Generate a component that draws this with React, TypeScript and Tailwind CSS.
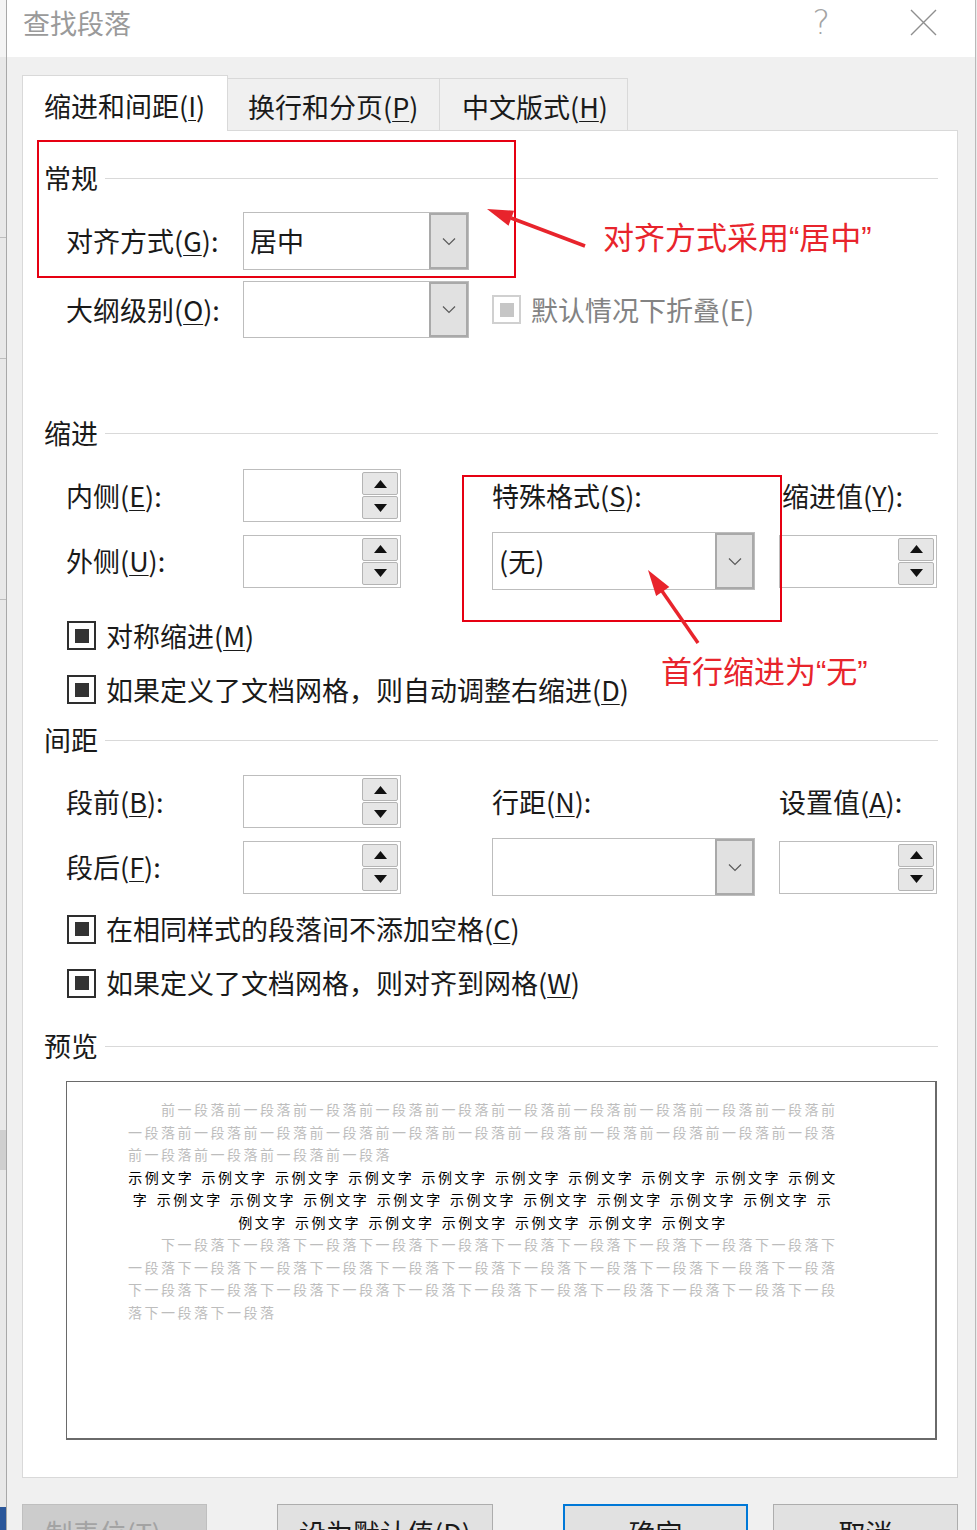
import React from "react";

const FONT = "font-['Noto_Sans_CJK_SC','Noto_Sans',sans-serif]";

const BEFORE = "前一段落".repeat(25);
const AFTER = "下一段落".repeat(34);
const S = "示例文字";
const SAMPLE = [
  Array(9).fill(S).join(" ") + " 示例文",
  "字 " + Array(9).fill(S).join(" ") + " 示",
  "例文字 " + Array(6).fill(S).join(" "),
];

function Key({ children }: { children: React.ReactNode }) {
  return <u className="underline decoration-1 underline-offset-[3px]">{children}</u>;
}

function Q({ children }: { children: React.ReactNode }) {
  return <span className="font-['Liberation_Sans',sans-serif]">{children}</span>;
}

function Label({ children, className = "" }: { children: React.ReactNode; className?: string }) {
  return <span className={`whitespace-nowrap text-[27px] leading-[36px] text-[#1a1a1a] ${className}`}>{children}</span>;
}

function Chevron() {
  return (
    <svg width="14" height="9" viewBox="0 0 14 9">
      <path d="M1 1.5 L7 7.5 L13 1.5" fill="none" stroke="#5a5a5a" strokeWidth="1.2" />
    </svg>
  );
}

function Dropdown({ w, h, value }: { w: string; h: string; value?: string }) {
  return (
    <div className={`flex ${w} ${h} border border-[#bdbdbd] bg-white`}>
      <div className="flex flex-1 items-center pl-[6px] text-[27px] leading-[36px] text-[#1a1a1a]">{value}</div>
      <div className="flex w-[39px] items-center justify-center border-2 border-[#a9a9a9] bg-[#e1e1e1]">
        <Chevron />
      </div>
    </div>
  );
}

function Spinner() {
  return (
    <div className="flex h-[53px] w-[158px] justify-end border border-[#bdbdbd] bg-white p-[2px]">
      <div className="flex w-[36px] flex-col gap-[1px]">
        <div className="flex flex-1 items-center justify-center rounded-[2px] border border-[#b4b4b4] bg-[#e6e6e6]">
          <svg width="13" height="8" viewBox="0 0 13 8">
            <path d="M6.5 0 L13 8 L0 8 Z" fill="#111" />
          </svg>
        </div>
        <div className="flex flex-1 items-center justify-center rounded-[2px] border border-[#b4b4b4] bg-[#e6e6e6]">
          <svg width="13" height="8" viewBox="0 0 13 8">
            <path d="M0 0 L13 0 L6.5 8 Z" fill="#111" />
          </svg>
        </div>
      </div>
    </div>
  );
}

function Check({ children, className = "" }: { children: React.ReactNode; className?: string }) {
  return (
    <div className={`flex h-[29px] shrink-0 items-center pl-[44px] ${className}`}>
      <div className="flex size-[29px] items-center justify-center border-2 border-[#2e2e2e] bg-white">
        <div className="size-[14px] bg-[#333]" />
      </div>
      <Label className="ml-[10px]">{children}</Label>
    </div>
  );
}

function Section({ title, className = "" }: { title: string; className?: string }) {
  return (
    <div className={`flex h-[36px] shrink-0 items-center pl-[21px] pr-[19px] ${className}`}>
      <Label>{title}</Label>
      <div className="ml-[7px] h-px flex-1 bg-[#d9d9d9]" />
    </div>
  );
}

const ROW = "grid shrink-0 grid-cols-[177px_249px_287px_158px] items-center pl-[43px]";

function Button({ label, w, tone }: { label: string; w: string; tone: "off" | "normal" | "primary" }) {
  const look =
    tone === "off"
      ? "border border-[#bfbfbf] bg-[#cccccc] text-[#a3a3a3]"
      : tone === "primary"
        ? "border-2 border-[#0078d7] bg-[#e1e1e1] text-[#1a1a1a]"
        : "border border-[#adadad] bg-[#e1e1e1] text-[#1a1a1a]";
  return (
    <div className={`flex h-[58px] shrink-0 items-center justify-center text-[27px] leading-[36px] ${w} ${look}`}>
      {label}
    </div>
  );
}

export default function App() {
  return (
    <div className={`relative flex h-[1530px] w-[977px] overflow-hidden bg-white ${FONT}`}>
      {/* window behind the dialog */}
      <div className="flex w-[7px] shrink-0 flex-col border-r border-[#a8a8a8] bg-[#e8e8e8]">
        <div className="h-[57px] shrink-0 bg-[#f4f4f4]" />
        <div className="mt-[180px] h-px shrink-0 bg-[#bdbdbd]" />
        <div className="mt-[120px] h-px shrink-0 bg-[#bdbdbd]" />
        <div className="mt-[240px] h-px shrink-0 bg-[#bdbdbd]" />
        <div className="mt-[530px] h-[40px] shrink-0 bg-[#cfcfcf]" />
        <div className="mt-auto h-[23px] shrink-0 bg-[#2b579a]" />
      </div>

      <div className="flex w-[968px] shrink-0 flex-col">
        {/* title bar */}
        <div className="flex h-[57px] shrink-0 items-start bg-white pl-[16px] pt-[5px]">
          <span className="text-[27px] leading-[36px] text-[#9a9a9a]">查找段落</span>
          <span className="ml-auto font-['DejaVu_Sans',sans-serif] text-[33px] font-extralight leading-[36px] text-[#a3a3a3]">?</span>
          <svg className="ml-[80px] mr-[38px] mt-[4px]" width="27" height="27" viewBox="0 0 27 27">
            <path d="M1 1 L26 26 M26 1 L1 26" stroke="#8f8f8f" strokeWidth="1.4" />
          </svg>
        </div>

        <div className="flex shrink-0 flex-col bg-[#f0f0f0] pl-[15px] pr-[17px]">
          {/* tabs */}
          <div className="mt-[18px] flex h-[55px] shrink-0 items-end">
            <div className="relative z-10 -mb-px flex h-[56px] w-[206px] items-center border border-b-0 border-[#d9d9d9] bg-white pl-[21px] pt-[4px]">
              <Label>
                缩进和间距(<Key>I</Key>)
              </Label>
            </div>
            <div className="flex h-[52px] w-[212px] items-center border border-b-0 border-l-0 border-[#d9d9d9] pl-[20px] pt-[4px]">
              <Label>
                换行和分页(<Key>P</Key>)
              </Label>
            </div>
            <div className="flex h-[52px] w-[188px] items-center border border-b-0 border-l-0 border-[#d9d9d9] pl-[22px] pt-[4px]">
              <Label>
                中文版式(<Key>H</Key>)
              </Label>
            </div>
          </div>

          {/* tab panel */}
          <div className="flex h-[1348px] shrink-0 flex-col border border-[#d9d9d9] bg-white">
            <Section title="常规" className="mt-[29px]" />
            <div className={`${ROW} mt-[16px]`}>
              <Label>
                对齐方式(<Key>G</Key>):
              </Label>
              <Dropdown w="w-[226px]" h="h-[58px]" value="居中" />
            </div>
            <div className={`${ROW} mt-[11px]`}>
              <Label>
                大纲级别(<Key>O</Key>):
              </Label>
              <Dropdown w="w-[226px]" h="h-[57px]" />
              <div className="col-span-2 flex items-center">
                <div className="flex size-[29px] items-center justify-center border-2 border-[#d0d0d0] bg-white">
                  <div className="size-[14px] bg-[#c6c6c6]" />
                </div>
                <span className="ml-[10px] text-[27px] leading-[36px] text-[#838383]">默认情况下折叠(E)</span>
              </div>
            </div>

            <Section title="缩进" className="mt-[77px]" />
            <div className={`${ROW} mt-[18px] h-[53px]`}>
              <Label>
                内侧(<Key>E</Key>):
              </Label>
              <Spinner />
              <Label>
                特殊格式(<Key>S</Key>):
              </Label>
              <Label className="pl-[3px]">
                缩进值(<Key>Y</Key>):
              </Label>
            </div>
            <div className={`${ROW} mt-[10px] h-[58px]`}>
              <Label>
                外侧(<Key>U</Key>):
              </Label>
              <Spinner />
              <Dropdown w="w-[263px]" h="h-[58px]" value="(无)" />
              <Spinner />
            </div>
            <Check className="mt-[31px]">
              对称缩进(<Key>M</Key>)
            </Check>
            <Check className="mt-[25px]">
              如果定义了文档网格，则自动调整右缩进(<Key>D</Key>)
            </Check>

            <Section title="间距" className="mt-[18px]" />
            <div className={`${ROW} mt-[17px] h-[53px]`}>
              <Label>
                段前(<Key>B</Key>):
              </Label>
              <Spinner />
              <Label>
                行距(<Key>N</Key>):
              </Label>
              <Label>
                设置值(<Key>A</Key>):
              </Label>
            </div>
            <div className={`${ROW} mt-[10px] h-[58px]`}>
              <Label>
                段后(<Key>F</Key>):
              </Label>
              <Spinner />
              <Dropdown w="w-[263px]" h="h-[58px]" />
              <Spinner />
            </div>
            <Check className="mt-[18.5px]">
              在相同样式的段落间不添加空格(<Key>C</Key>)
            </Check>
            <Check className="mt-[25px]">
              如果定义了文档网格，则对齐到网格(<Key>W</Key>)
            </Check>

            <Section title="预览" className="mt-[30.5px]" />
            <div className="ml-[43px] mt-[17px] h-[359px] w-[871px] shrink-0 border border-r-2 border-b-2 border-[#6a6a6a] bg-white pl-[61px] pt-[16px]">
              <div className="w-[710px] whitespace-nowrap text-[14px] leading-[22.5px] tracking-[2.5px]">
                <div className="pl-[33px] text-[#bdbdbd]">{BEFORE.slice(0, 41)}</div>
                <div className="text-[#bdbdbd]">{BEFORE.slice(41, 84)}</div>
                <div className="text-[#bdbdbd]">{BEFORE.slice(84, 100)}</div>
                {SAMPLE.map((line, i) => (
                  <div key={i} className="text-center text-black [word-spacing:1.7px]">
                    {line}
                  </div>
                ))}
                <div className="pl-[33px] text-[#bdbdbd]">{AFTER.slice(0, 41)}</div>
                <div className="text-[#bdbdbd]">{AFTER.slice(41, 84)}</div>
                <div className="text-[#bdbdbd]">{AFTER.slice(84, 127)}</div>
                <div className="text-[#bdbdbd]">{AFTER.slice(127, 136)}</div>
              </div>
            </div>
          </div>

          {/* buttons */}
          <div className="mt-[26px] flex shrink-0">
            <Button label="制表位(T)..." w="w-[185px]" tone="off" />
            <Button label="设为默认值(D)" w="ml-[70px] w-[216px]" tone="normal" />
            <Button label="确定" w="ml-[70px] w-[185px]" tone="primary" />
            <Button label="取消" w="ml-[25px] w-[185px]" tone="normal" />
          </div>
        </div>
      </div>
      <div className="w-[2px] shrink-0 border-l border-[#b9b9b9] bg-[#ececec]" />

      {/* red annotations */}
      <div className="pointer-events-none absolute left-[37px] top-[140px] h-[138px] w-[479px] border-2 border-[#e60012]" />
      <div className="pointer-events-none absolute left-[462px] top-[475px] h-[147px] w-[320px] border-2 border-[#e60012]" />
      <svg className="pointer-events-none absolute left-0 top-0" width="977" height="1530" viewBox="0 0 977 1530">
        <path d="M585 246 L511 218" stroke="#e8242c" strokeWidth="3.5" />
        <path d="M487 209 L508.5 225.7 L514.1 210.7 Z" fill="#e8242c" />
        <path d="M698 643 L662 591" stroke="#e8242c" strokeWidth="3.5" />
        <path d="M648 570 L656.1 595.9 L669.3 586.9 Z" fill="#e8242c" />
      </svg>
      <span className="pointer-events-none absolute left-[603px] top-[216px] whitespace-nowrap text-[31px] leading-[40px] text-[#e8242c]">
        对齐方式采用<Q>“</Q>居中<Q>”</Q>
      </span>
      <span className="pointer-events-none absolute left-[661px] top-[650px] whitespace-nowrap text-[31px] leading-[40px] text-[#e8242c]">
        首行缩进为<Q>“</Q>无<Q>”</Q>
      </span>
    </div>
  );
}
